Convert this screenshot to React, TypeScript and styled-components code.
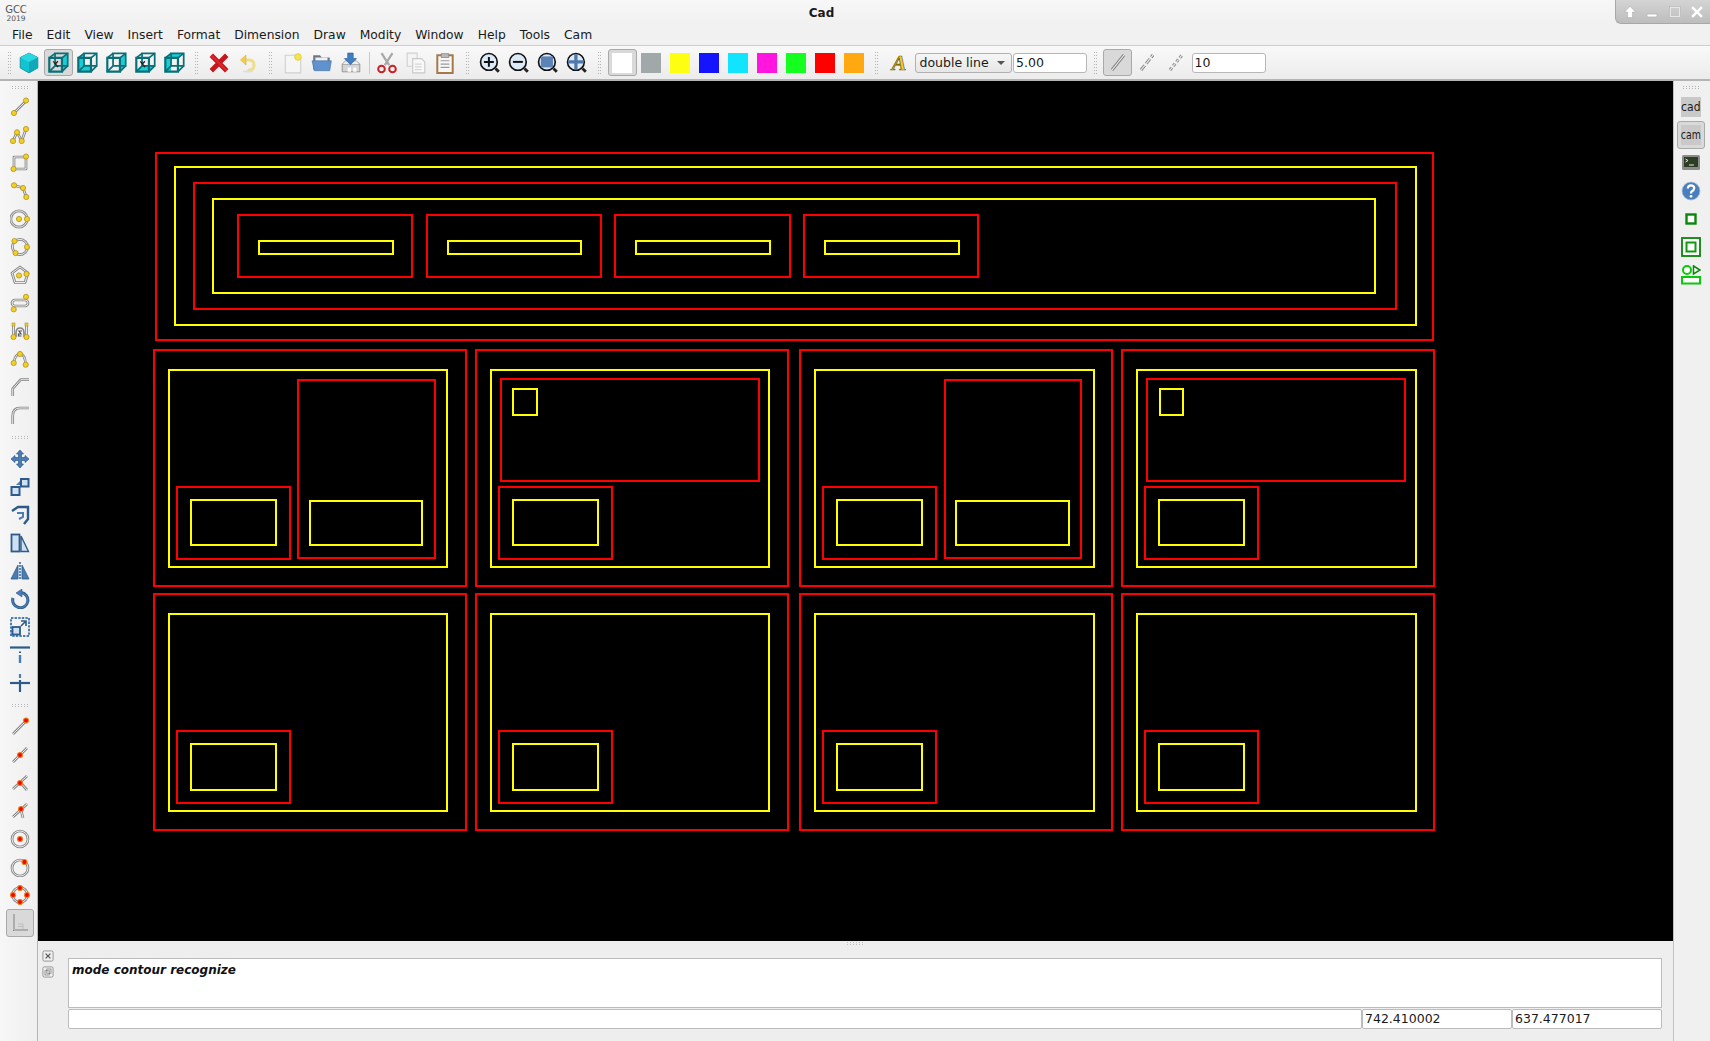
import React, { ReactNode } from 'react';
import styled, { createGlobalStyle } from 'styled-components';

const FONT = '"DejaVu Sans", Verdana, sans-serif';

const GlobalStyle = createGlobalStyle`
  html, body {
    margin: 0;
    padding: 0;
    background: #eeeeee;
    overflow: hidden;
  }
  * {
    box-sizing: border-box;
  }
`;

const Root = styled.div`
  display: flex;
  flex-direction: column;
  width: 1710px;
  height: 1041px;
  font-family: ${FONT};
  font-size: 12.5px;
  color: #1a1a1a;
  background: #eeeeee;
`;

/* title bar */

const TitleBar = styled.div`
  display: grid;
  grid-template-columns: 28px 1fr 95px;
  align-items: start;
  height: 24px;
  background: linear-gradient(#f7f7f7, #f1f1f1);
`;

const Logo = styled.div`
  display: flex;
  flex-direction: column;
  align-items: center;
  padding: 6px 0 0 4px;
  color: #555;
  font-size: 10px;
  line-height: 8.5px;
`;

const LogoYear = styled.span`
  font-size: 7.5px;
  line-height: 7.5px;
`;

const WindowTitle = styled.div`
  padding-top: 1px;
  text-align: center;
  font-size: 12px;
  font-weight: bold;
  line-height: 24px;
`;

const WindowButtons = styled.div`
  display: flex;
  align-items: center;
  justify-content: space-between;
  height: 24px;
  padding: 0 6px 0 7px;
  background: linear-gradient(#d4d4d4, #bdbdbd);
  border-left: 1px solid #a8a8a8;
  border-bottom: 1px solid #a8a8a8;
  border-bottom-left-radius: 6px;
`;

/* menu */

const MenuBar = styled.div`
  display: flex;
  align-items: center;
  height: 22px;
  padding-left: 5px;
  background: #f1f1f1;
  border-bottom: 1px solid #cfcfcf;
  font-size: 12.3px;
`;

const MenuItem = styled.span`
  padding: 0 7px;
`;

/* top toolbar */

const ToolBar = styled.div`
  display: flex;
  align-items: center;
  height: 35px;
  padding: 0 0 0 4.5px;
  background: linear-gradient(#f9f9f9, #ececec);
  border-bottom: 2px solid #b4b4b4;
`;

const Grip = styled.div`
  flex: none;
  display: flex;
  align-items: center;
  justify-content: center;
  width: 16px;
  &::before {
    content: '';
    width: 3px;
    height: 22px;
    background: repeating-linear-gradient(#b5b5b5 0 1px, transparent 1px 3px) left / 1px 100% no-repeat,
      repeating-linear-gradient(#b5b5b5 0 1px, transparent 1px 3px) right / 1px 100% no-repeat;
  }
`;

const FirstGrip = styled(Grip)`
  width: 10px;
`;

const Separator = styled.div`
  flex: none;
  width: 7px;
  height: 22px;
  margin: 0;
  &::before {
    content: '';
    display: block;
    width: 1px;
    height: 100%;
    margin-left: 3px;
    background: #c9c9c9;
  }
`;

const ToolButton = styled.div<{ $active?: boolean }>`
  flex: none;
  display: flex;
  align-items: center;
  justify-content: center;
  width: 29px;
  height: 27px;
  border: 1px solid ${props => (props.$active ? '#a9a9a9' : 'transparent')};
  border-radius: 3px;
  background: ${props => (props.$active ? '#d9d9d9' : 'transparent')};
`;

const Swatch = styled.div<{ $color: string }>`
  width: 20px;
  height: 20px;
  background: ${props => props.$color};
`;

const FontGlyph = styled.span`
  font-family: 'Liberation Serif', serif;
  font-size: 22px;
  font-weight: bold;
  font-style: italic;
  line-height: 22px;
  color: #f0cc2c;
  -webkit-text-stroke: 0.7px #6b5a10;
`;

const Combo = styled.div`
  flex: none;
  display: flex;
  align-items: center;
  justify-content: space-between;
  width: 97px;
  height: 20px;
  margin-left: 1px;
  padding: 0 6px 0 4px;
  border: 1px solid #b0b0b0;
  border-radius: 3px;
  background: linear-gradient(#f6f6f6, #e6e6e6);
  &::after {
    content: '';
    border-left: 4px solid transparent;
    border-right: 4px solid transparent;
    border-top: 4px solid #555;
  }
`;

const Field = styled.div<{ $width: number }>`
  flex: none;
  width: ${props => props.$width}px;
  height: 20px;
  margin-left: 1.5px;
  padding-left: 2px;
  line-height: 18px;
  background: #fff;
  border: 1px solid #b7b7b7;
  border-radius: 3px;
`;

/* middle */

const Middle = styled.div`
  flex: 1;
  display: flex;
  min-height: 0;
`;

const SideBar = styled.div`
  flex: none;
  display: flex;
  flex-direction: column;
  width: 38px;
  padding-left: 6px;
  background: linear-gradient(90deg, #f7f7f7, #efefef);
  border-right: 1px solid #b4b4b4;
`;

const RightBar = styled.div`
  flex: none;
  display: flex;
  flex-direction: column;
  align-items: center;
  width: 37px;
  padding-right: 2px;
  background: #f0f0f0;
  border-left: 1px solid #c2c2c2;
`;

const SideGrip = styled.div<{ $height: number }>`
  flex: none;
  display: flex;
  align-items: center;
  justify-content: center;
  width: 28px;
  height: ${props => props.$height}px;
  &::before {
    content: '';
    width: 16px;
    height: 3px;
    background: repeating-linear-gradient(90deg, #b5b5b5 0 1px, transparent 1px 3px) top / 100% 1px no-repeat,
      repeating-linear-gradient(90deg, #b5b5b5 0 1px, transparent 1px 3px) bottom / 100% 1px no-repeat;
  }
`;

const SideButton = styled.div<{ $active?: boolean }>`
  flex: none;
  display: flex;
  align-items: center;
  justify-content: center;
  width: 28px;
  height: 28px;
  border: 1px solid ${props => (props.$active ? '#a9a9a9' : 'transparent')};
  border-radius: 3px;
  background: ${props => (props.$active ? '#d9d9d9' : 'transparent')};
`;

const ModeLabel = styled.span`
  display: flex;
  justify-content: center;
  width: 20px;
  height: 20px;
  line-height: 20px;
  font-size: 12px;
  background: #c9c9c9;
`;

const ModeText = styled.span<{ $squeeze: number }>`
  flex: none;
  transform: scaleX(${props => props.$squeeze});
`;

const Center = styled.div`
  flex: 1;
  display: flex;
  flex-direction: column;
  min-width: 0;
`;

const Canvas = styled.svg`
  display: block;
  flex: none;
  width: 1635px;
  height: 860px;
  background: #000;
`;

const Dock = styled.div`
  flex: 1;
  display: flex;
  flex-direction: column;
  background: #eeeeee;
`;

const DockHandle = styled.div`
  flex: none;
  display: flex;
  justify-content: center;
  align-items: center;
  height: 5px;
  &::before {
    content: '';
    width: 18px;
    height: 3px;
    background: repeating-linear-gradient(90deg, #c0c0c0 0 1px, transparent 1px 3px) top / 100% 1px no-repeat,
      repeating-linear-gradient(90deg, #c0c0c0 0 1px, transparent 1px 3px) bottom / 100% 1px no-repeat;
  }
`;

const DockRow = styled.div`
  flex: 1;
  display: flex;
`;

const DockControls = styled.div`
  flex: none;
  display: flex;
  flex-direction: column;
  gap: 4px;
  width: 30px;
  padding: 4px 0 0 4px;
`;

const DockBody = styled.div`
  flex: none;
  width: 1594px;
  padding-top: 12px;
`;

const Output = styled.div`
  height: 50px;
  padding: 3px 3px;
  background: #fff;
  border: 1px solid #bcbcbc;
  font-weight: bold;
  font-style: italic;
  font-size: 12px;
  line-height: 16px;
  color: #111;
`;

const InputRow = styled.div`
  display: flex;
  margin-top: 1px;
`;

const InputBox = styled.div<{ $width: number }>`
  flex: none;
  width: ${props => props.$width}px;
  height: 20px;
  padding-left: 2px;
  line-height: 18px;
  background: #fff;
  border: 1px solid #bcbcbc;
  border-radius: 2px;
`;

/* icons */

const Ico = (props: { children: ReactNode; size?: number }) => (
  <svg width={props.size || 20} height={props.size || 20} viewBox="0 0 20 20" fill="none">
    {props.children}
  </svg>
);

const Dbl = ({ d }: { d: string }) => (
  <>
    <path d={d} stroke="#868686" strokeWidth={2.7} strokeLinejoin="round" />
    <path d={d} stroke="#ececec" strokeWidth={1} strokeLinejoin="round" />
  </>
);

const Ring = ({ x, y, r }: { x: number; y: number; r: number }) => (
  <>
    <circle cx={x} cy={y} r={r} stroke="#868686" strokeWidth={2.7} />
    <circle cx={x} cy={y} r={r} stroke="#ececec" strokeWidth={1} />
  </>
);

const Dot = ({ x, y }: { x: number; y: number }) => (
  <circle cx={x} cy={y} r={2.6} fill="#f3d021" stroke="#ad9322" strokeWidth={0.8} />
);

const Snap = ({ x, y }: { x: number; y: number }) => (
  <circle cx={x} cy={y} r={2.5} fill="#f40000" stroke="#ee8020" strokeWidth={1.2} />
);

// perspective wire cube: back square up right, front square down left
const CubeWire = ({ face, mark }: { face: string; mark?: boolean }) => (
  <Ico size={23}>
    <path d={face} fill="#19cdd6" />
    <path d="M7 2H18V13H7Z" stroke="#0a6f78" strokeWidth={1.5} />
    <path d="M2 6H13V18H2Z" stroke="#0a6f78" strokeWidth={1.9} />
    <path d="M2 6 7 2M13 6 18 2M13 18 18 13M2 18 7 13" stroke="#0a6f78" strokeWidth={1.5} />
    {mark && <path d="M5.5 9 9.5 14M9.5 9 7 11.5" stroke="#222" strokeWidth={1.2} />}
  </Ico>
);

const CubeSolid = () => (
  <Ico size={22}>
    <path d="M10 1 18 5V14.5L10 19 2 14.5V5Z" fill="#12c4d2" stroke="#0d8f9c" strokeWidth={0.8} />
    <path d="M10 1 18 5 10 9 2 5Z" fill="#2ad8e2" />
    <path d="M10 9 18 5V14.5L10 19Z" fill="#0fa9b8" />
  </Ico>
);

const Cross = () => (
  <Ico size={22}>
    <path d="M3 3 17 17M17 3 3 17" stroke="#c4161c" strokeWidth={4.4} />
    <path d="M3 3 17 17" stroke="#e5252b" strokeWidth={1.6} />
  </Ico>
);

const Undo = () => (
  <Ico>
    <path d="M5 7H11Q16 7 16 12T11 17" stroke="#efdc8c" strokeWidth={3} strokeLinecap="round" />
    <path d="M8 2 2.5 7 8 12Z" fill="#f0cf4a" stroke="#d6b43a" strokeWidth={0.6} />
    <ellipse cx={10} cy={18.5} rx={5} ry={1} fill="#ddd" />
  </Ico>
);

const NewDoc = () => (
  <Ico size={22}>
    <path d="M3 3H14L17 6V19H3Z" fill="#f5f5f5" stroke="#d0d0d0" />
    <circle cx={14.5} cy={4.5} r={3} fill="#f2e64a" stroke="#e8c93a" strokeWidth={0.8} />
  </Ico>
);

const OpenFolder = () => (
  <Ico size={22}>
    <path d="M2 3H8L10 5H17V16H2Z" fill="#6d7782" />
    <path d="M4 5H15V10H4Z" fill="#eef1f4" />
    <path d="M1 8H18.5L17 17H3Z" fill="#5f92cf" stroke="#4a74a8" strokeWidth={0.6} />
  </Ico>
);

const SaveBox = () => (
  <Ico size={22}>
    <path d="M2 11H18V18H2Z" fill="#d5d5d5" stroke="#8c8c8c" strokeWidth={0.8} />
    <path d="M2 11 5 8H15L18 11" fill="#eee" stroke="#9a9a9a" strokeWidth={0.8} />
    <path d="M7 14H10V18H7ZM12 14H15V18H12Z" fill="#fafafa" />
    <path d="M7 1H12V6H15L9.5 11.5 4 6H7Z" fill="#3f80c2" stroke="#2d5f96" strokeWidth={0.6} />
  </Ico>
);

const Scissors = () => (
  <Ico size={22}>
    <path d="M5 1 12 12M15 1 8 12" stroke="#a8a8a8" strokeWidth={2} />
    <circle cx={5} cy={15.5} r={3} stroke="#cc2027" strokeWidth={1.8} />
    <circle cx={15} cy={15.5} r={3} stroke="#cc2027" strokeWidth={1.8} />
  </Ico>
);

const CopyDocs = () => (
  <Ico size={22}>
    <path d="M2 1H11V13H2Z" fill="#f4f4f4" stroke="#d0d0d0" />
    <path d="M7 6H15L18 9V19H7Z" fill="#f8f8f8" stroke="#c8c8c8" />
    <path d="M9 11H15M9 13.5H15M9 16H15" stroke="#d5d5d5" />
  </Ico>
);

const Paste = () => (
  <Ico size={22}>
    <path d="M3 3H17V19H3Z" fill="#f7f7f7" stroke="#a57a48" strokeWidth={1.8} />
    <path d="M6.5 1.5H13.5V5H6.5Z" fill="#b9b9b9" stroke="#777" strokeWidth={0.6} />
    <path d="M6 8H14M6 11H14M6 14H14" stroke="#9a9a9a" />
  </Ico>
);

const Lens = ({ children }: { children: ReactNode }) => (
  <Ico size={22}>
    <circle cx={9} cy={9} r={7.6} fill="#dce9f6" stroke="#111" strokeWidth={1.5} />
    {children}
    <path d="M15 15 18 18" stroke="#222" strokeWidth={2.6} />
  </Ico>
);

const Pencil = ({ broken }: { broken?: number }) => (
  <Ico>
    <path
      d="M4 17 16 2"
      stroke="#808080"
      strokeWidth={3}
      strokeDasharray={broken ? `${broken} 2.2` : undefined}
    />
    <path
      d="M4 17 16 2"
      stroke="#f0f0f0"
      strokeWidth={1.2}
      strokeDasharray={broken ? `${broken} 2.2` : undefined}
    />
  </Ico>
);

const BLUE = '#4a7db5';
const BLUE_DARK = '#2d5a8a';
const PALE = '#cfe0f0';

const leftIcons: Array<ReactNode> = [
  <Ico><Dbl d="M4 16 16 4" /><Dot x={4} y={16} /><Dot x={16} y={3.5} /></Ico>,
  <Ico><Dbl d="M3 16 7 7 11.7 16 16 4" /><Dot x={3} y={16} /><Dot x={7} y={7.3} /><Dot x={11.7} y={16} /><Dot x={16} y={4} /></Ico>,
  <Ico><Dbl d="M4 4H16V16H4Z" /><Dot x={3.5} y={16} /><Dot x={16} y={3.5} /></Ico>,
  <Ico><Dbl d="M4 4.3 13 7 16.3 16" /><Dot x={4} y={4.3} /><Dot x={13} y={7} /><Dot x={16.3} y={16} /></Ico>,
  <Ico><Ring x={9} y={10} r={8.2} /><Dot x={9} y={10} /><Dot x={17} y={10} /></Ico>,
  <Ico><Ring x={10} y={10} r={7.6} /><Dot x={4.5} y={4} /><Dot x={17} y={10} /><Dot x={5.5} y={16} /></Ico>,
  <Ico><Dbl d="M10 2 18 8 15 17.5H5L2 8Z" /><Dot x={9} y={10.5} /><Dot x={16.5} y={9} /></Ico>,
  <Ico><rect x={2} y={7} width={16} height={6} rx={3} stroke="#868686" strokeWidth={2.7} /><rect x={2} y={7} width={16} height={6} rx={3} stroke="#ececec" strokeWidth={1} /><Dot x={16} y={3.8} /><Dot x={3.7} y={16.3} /></Ico>,
  <Ico><Dbl d="M3.5 4V16M16.5 4V16" /><path d="M6 16V12Q6 7 10 7T14 12V16" stroke="#868686" strokeWidth={1.6} /><path d="M12 10H9L11 13H8.5V15H11.5" stroke="#555" strokeWidth={1.2} /><rect x={2} y={2} width={3} height={3} fill="#f3d021" stroke="#ad9322" strokeWidth={0.6} /><rect x={15} y={2} width={3} height={3} fill="#f3d021" stroke="#ad9322" strokeWidth={0.6} /><Dot x={3.5} y={16} /><Dot x={16.5} y={16} /></Ico>,
  <Ico><Dbl d="M3.7 14Q5 5 10 5T15.7 15.7" /><Dot x={3.7} y={14} /><Dot x={10} y={5} /><Dot x={15.7} y={15.7} /></Ico>,
  <Ico><Dbl d="M2.7 19V11.7L10.7 2.7H19" /></Ico>,
  <Ico><Dbl d="M2.7 19V11Q2.7 3 10 3H19" /></Ico>,
];

const editIcons: Array<ReactNode> = [
  <Ico><path d="M10 1 13.5 5H11.5V8.5H15V6.5L19 10 15 13.5V11.5H11.5V15H13.5L10 19 6.5 15H8.5V11.5H5V13.5L1 10 5 6.5V8.5H8.5V5H6.5Z" fill={BLUE} stroke={BLUE_DARK} strokeWidth={0.7} /></Ico>,
  <Ico><rect x={1.5} y={10} width={8} height={8} stroke={BLUE_DARK} strokeWidth={2} fill={PALE} /><rect x={11} y={2} width={7.5} height={7.5} stroke={BLUE_DARK} strokeWidth={2} fill={PALE} /><path d="M6 8 10 4V8Z" fill={BLUE} /></Ico>,
  <Ico><path d="M2 6 8 2H18V14L14 19" stroke={BLUE_DARK} strokeWidth={2.4} /><path d="M7 8H13V12L9 14" stroke={BLUE} strokeWidth={2} /></Ico>,
  <Ico><rect x={1.5} y={1.5} width={8} height={17} stroke={BLUE_DARK} strokeWidth={1.8} fill={PALE} /><path d="M11 3 18.5 18.5H11Z" stroke={BLUE_DARK} strokeWidth={1.4} fill={PALE} /></Ico>,
  <Ico><path d="M8 4V18H1Z" fill={BLUE} stroke={BLUE_DARK} strokeWidth={0.8} /><path d="M12 4V18H19Z" fill={BLUE} stroke={BLUE_DARK} strokeWidth={0.8} /><path d="M10 1V19" stroke={BLUE} strokeWidth={1.8} strokeDasharray="2 1" /></Ico>,
  <Ico><path d="M3 9A7.6 7.6 0 1 0 11 3.6" stroke={BLUE_DARK} strokeWidth={3} /><path d="M2.8 9A7.6 7.6 0 1 0 11 3.6" stroke={BLUE} strokeWidth={1.4} /><path d="M12 0 6 4 12 8Z" fill={BLUE} stroke={BLUE_DARK} strokeWidth={0.6} /></Ico>,
  <Ico><rect x={1} y={1} width={18} height={18} stroke={BLUE} strokeWidth={2} strokeDasharray="2.4 1.2" /><rect x={2.5} y={10} width={7.5} height={7.5} stroke={BLUE_DARK} strokeWidth={1.8} fill={PALE} /><path d="M11 9 15 5M11 4H16V9" stroke={BLUE_DARK} strokeWidth={1.6} /></Ico>,
  <Ico><path d="M0 2.5H20" stroke={BLUE_DARK} strokeWidth={2.2} /><path d="M10 6.5V8" stroke={BLUE_DARK} strokeWidth={2} /><path d="M10 10V18" stroke={BLUE} strokeWidth={2.4} /></Ico>,
  <Ico><path d="M0 10H20" stroke={BLUE_DARK} strokeWidth={2.2} /><path d="M10 1V5" stroke={BLUE} strokeWidth={2.2} /><path d="M10 7V19" stroke={BLUE_DARK} strokeWidth={2.2} /></Ico>,
];

const snapIcons: Array<ReactNode> = [
  <Ico><Dbl d="M3 17 16 4" /><Snap x={16} y={3.5} /></Ico>,
  <Ico><Dbl d="M3 17 17 3" /><Snap x={10} y={10} /></Ico>,
  <Ico><Dbl d="M3 16 17 3M10 9 17 17" /><Snap x={10} y={10} /></Ico>,
  <Ico><Dbl d="M3 16 17 3M11 9 13 17" /><Snap x={11} y={8} /></Ico>,
  <Ico><Ring x={10} y={10} r={8} /><Snap x={10} y={10} /></Ico>,
  <Ico><Ring x={10} y={11} r={8} /><Snap x={14.5} y={5} /></Ico>,
  <Ico><Ring x={10} y={10} r={7.5} /><Snap x={10} y={3} /><Snap x={3} y={10} /><Snap x={17} y={10} /><Snap x={10} y={17} /></Ico>,
  <Ico>
    <path d="M4 1V17H18" stroke="#8a8a8a" strokeWidth={2} />
    <path d="M4 1V17H18" stroke="#ececec" strokeWidth={0.7} />
    <path d="M8 11H13V16M8 13.5H13" stroke="#bdbdbd" strokeWidth={1} />
  </Ico>,
];

const drawing: Array<[number, number, number, number, 'r' | 'y']> = [
  [156, 153, 1433, 340, 'r'], [175, 167, 1416, 325, 'y'], [194, 183, 1396, 309, 'r'], [213, 199, 1375, 293, 'y'],
  [238, 215, 412, 277, 'r'], [259, 241, 393, 254, 'y'], [427, 215, 601, 277, 'r'], [448, 241, 581, 254, 'y'],
  [615, 215, 790, 277, 'r'], [636, 241, 770, 254, 'y'], [804, 215, 978, 277, 'r'], [825, 241, 959, 254, 'y'],

  [154, 350, 466, 586, 'r'], [169, 370, 447, 567, 'y'], [298, 380, 435, 558, 'r'], [177, 487, 290, 559, 'r'], [191, 500, 276, 545, 'y'], [310, 501, 422, 545, 'y'],
  [476, 350, 788, 586, 'r'], [491, 370, 769, 567, 'y'], [501, 379, 759, 481, 'r'], [513, 389, 537, 415, 'y'], [499, 487, 612, 559, 'r'], [513, 500, 598, 545, 'y'],
  [800, 350, 1112, 586, 'r'], [815, 370, 1094, 567, 'y'], [945, 380, 1081, 558, 'r'], [823, 487, 936, 559, 'r'], [837, 500, 922, 545, 'y'], [956, 501, 1069, 545, 'y'],
  [1122, 350, 1434, 586, 'r'], [1137, 370, 1416, 567, 'y'], [1147, 379, 1405, 481, 'r'], [1160, 389, 1183, 415, 'y'], [1145, 487, 1258, 559, 'r'], [1159, 500, 1244, 545, 'y'],

  [154, 594, 466, 830, 'r'], [169, 614, 447, 811, 'y'], [177, 731, 290, 803, 'r'], [191, 744, 276, 790, 'y'],
  [476, 594, 788, 830, 'r'], [491, 614, 769, 811, 'y'], [499, 731, 612, 803, 'r'], [513, 744, 598, 790, 'y'],
  [800, 594, 1112, 830, 'r'], [815, 614, 1094, 811, 'y'], [823, 731, 936, 803, 'r'], [837, 744, 922, 790, 'y'],
  [1122, 594, 1434, 830, 'r'], [1137, 614, 1416, 811, 'y'], [1145, 731, 1258, 803, 'r'], [1159, 744, 1244, 790, 'y'],
];

const menus = ['File', 'Edit', 'View', 'Insert', 'Format', 'Dimension', 'Draw', 'Modity', 'Window', 'Help', 'Tools', 'Cam'];
const colors = ['#a0a8aa', '#ffff14', '#1414ff', '#10e4ff', '#ff14e0', '#14ff20', '#ff0000', '#ffa810'];

const App = () => {
  return (
    <Root>
      <GlobalStyle />
      <TitleBar>
        <Logo>
          GCC
          <LogoYear>2019</LogoYear>
        </Logo>
        <WindowTitle>Cad</WindowTitle>
        <WindowButtons>
          <Ico size={14}>
            <path d="M10 2 18 10H13.5V18H6.5V10H2Z" fill="#fff" stroke="#999" strokeWidth={0.6} />
          </Ico>
          <Ico size={14}>
            <path d="M3 13H17V17H3Z" fill="#fff" stroke="#999" strokeWidth={0.6} />
          </Ico>
          <Ico size={14}>
            <rect x={3} y={3} width={14} height={14} stroke="#e8e8e8" strokeWidth={2.4} />
            <rect x={1.8} y={1.8} width={16.4} height={16.4} stroke="#999" strokeWidth={0.6} />
          </Ico>
          <Ico size={14}>
            <path d="M3 3 17 17M17 3 3 17" stroke="#fff" strokeWidth={3.6} />
          </Ico>
        </WindowButtons>
      </TitleBar>

      <MenuBar>
        {menus.map(m => (
          <MenuItem key={m}>{m}</MenuItem>
        ))}
      </MenuBar>

      <ToolBar>
        <FirstGrip />
        <ToolButton><CubeSolid /></ToolButton>
        <ToolButton $active={true}><CubeWire face="M13 6 18 2V13L13 18Z" mark={true} /></ToolButton>
        <ToolButton><CubeWire face="M2 6 7 2V13L2 18ZM2 12H13V18H2Z" /></ToolButton>
        <ToolButton><CubeWire face="M13 6 18 2V13L13 18Z" /></ToolButton>
        <ToolButton><CubeWire face="M2 18 7 13H18L13 18Z" mark={true} /></ToolButton>
        <ToolButton><CubeWire face="M2 6 7 2H18L13 6ZM2 6H7V18H2Z" /></ToolButton>
        <Grip />
        <ToolButton><Cross /></ToolButton>
        <ToolButton><Undo /></ToolButton>
        <Grip />
        <ToolButton><NewDoc /></ToolButton>
        <ToolButton><OpenFolder /></ToolButton>
        <ToolButton><SaveBox /></ToolButton>
        <Separator />
        <ToolButton><Scissors /></ToolButton>
        <ToolButton><CopyDocs /></ToolButton>
        <ToolButton><Paste /></ToolButton>
        <Grip />
        <ToolButton><Lens><path d="M4.5 9H13.5M9 4.5V13.5" stroke="#111" strokeWidth={1.8} /></Lens></ToolButton>
        <ToolButton><Lens><path d="M4.5 9H13.5" stroke="#111" strokeWidth={1.8} /></Lens></ToolButton>
        <ToolButton><Lens><rect x={3.5} y={4} width={11} height={10} fill="#5d82b5" /></Lens></ToolButton>
        <ToolButton><Lens><path d="M2 9H16M9 2V16" stroke="#4f78ad" strokeWidth={3} /></Lens></ToolButton>
        <Grip />
        <ToolButton $active={true}><Swatch $color="#ffffff" /></ToolButton>
        {colors.map(c => (
          <ToolButton key={c}><Swatch $color={c} /></ToolButton>
        ))}
        <Grip />
        <ToolButton><FontGlyph>A</FontGlyph></ToolButton>
        <Combo>double line</Combo>
        <Field $width={74}>5.00</Field>
        <Grip />
        <ToolButton $active={true}><Pencil /></ToolButton>
        <ToolButton><Pencil broken={6} /></ToolButton>
        <ToolButton><Pencil broken={3} /></ToolButton>
        <Field $width={74}>10</Field>
      </ToolBar>

      <Middle>
        <SideBar>
          <SideGrip $height={12} />
          {leftIcons.map((icon, i) => (
            <SideButton key={i}>{icon}</SideButton>
          ))}
          <SideGrip $height={16} />
          {editIcons.map((icon, i) => (
            <SideButton key={i}>{icon}</SideButton>
          ))}
          <SideGrip $height={16} />
          {snapIcons.map((icon, i) => (
            <SideButton key={i} $active={i === snapIcons.length - 1}>{icon}</SideButton>
          ))}
        </SideBar>

        <Center>
          <Canvas viewBox="38 81 1635 860">
            {drawing.map(([x1, y1, x2, y2, c], i) => (
              <rect
                key={i}
                x={x1}
                y={y1}
                width={x2 - x1}
                height={y2 - y1}
                fill="none"
                stroke={c === 'r' ? '#ff0000' : '#ffff00'}
                strokeWidth={2}
                shapeRendering="crispEdges"
              />
            ))}
          </Canvas>
          <Dock>
            <DockHandle />
            <DockRow>
              <DockControls>
                <Ico size={12}>
                  <rect x={1.5} y={1.5} width={17} height={17} rx={2.5} stroke="#888" strokeWidth={1.4} />
                  <path d="M6 6 14 14M14 6 6 14" stroke="#555" strokeWidth={2} />
                </Ico>
                <Ico size={12}>
                  <rect x={1.5} y={1.5} width={17} height={17} rx={2.5} stroke="#888" strokeWidth={1.4} />
                  <rect x={8} y={5} width={7} height={7} stroke="#777" strokeWidth={1.2} />
                  <rect x={5} y={8} width={7} height={7} stroke="#777" strokeWidth={1.2} />
                </Ico>
              </DockControls>
              <DockBody>
                <Output>mode contour recognize</Output>
                <InputRow>
                  <InputBox $width={1294} />
                  <InputBox $width={150}>742.410002</InputBox>
                  <InputBox $width={150}>637.477017</InputBox>
                </InputRow>
              </DockBody>
            </DockRow>
          </Dock>
        </Center>

        <RightBar>
          <SideGrip $height={12} />
          <SideButton><ModeLabel><ModeText $squeeze={0.9}>cad</ModeText></ModeLabel></SideButton>
          <SideButton $active={true}><ModeLabel><ModeText $squeeze={0.78}>cam</ModeText></ModeLabel></SideButton>
          <SideButton>
            <Ico>
              <rect x={1} y={2} width={18} height={15} rx={1.5} fill="#8b8b8b" />
              <rect x={3} y={4} width={14} height={10} fill="#2c3d24" />
              <path d="M4.5 6 7 7.5 4.5 9M8 12H13" stroke="#e6e6e6" strokeWidth={1} />
            </Ico>
          </SideButton>
          <SideButton>
            <Ico>
              <circle cx={10} cy={10} r={9} fill="#4a7fbe" stroke="#a8bcd4" strokeWidth={0.8} />
              <path d="M6.8 7.5Q7 4.3 10.2 4.3 13.4 4.6 13.2 7.3 13 9 11 10.2 10 10.9 10 12.5" stroke="#fff" strokeWidth={2.2} />
              <circle cx={10} cy={15.3} r={1.4} fill="#fff" />
            </Ico>
          </SideButton>
          <SideButton>
            <Ico>
              <rect x={5.5} y={5.5} width={9} height={9} fill="#fff" stroke="#0a860a" strokeWidth={2.4} />
            </Ico>
          </SideButton>
          <SideButton>
            <Ico>
              <rect x={1} y={1} width={18} height={18} fill="#fff" stroke="#0a860a" strokeWidth={1.8} />
              <rect x={5.5} y={5.5} width={9} height={9} stroke="#0c9c0c" strokeWidth={2} />
            </Ico>
          </SideButton>
          <SideButton>
            <Ico>
              <circle cx={6} cy={5} r={4} fill="#fff" stroke="#0cc80c" strokeWidth={2} />
              <path d="M12.5 1 19 5 12.5 9Z" fill="#fff" stroke="#0a860a" strokeWidth={1.5} />
              <rect x={1} y={12} width={18} height={6.5} fill="#fff" stroke="#0cc80c" strokeWidth={2} />
            </Ico>
          </SideButton>
        </RightBar>
      </Middle>
    </Root>
  );
};

export default App;
